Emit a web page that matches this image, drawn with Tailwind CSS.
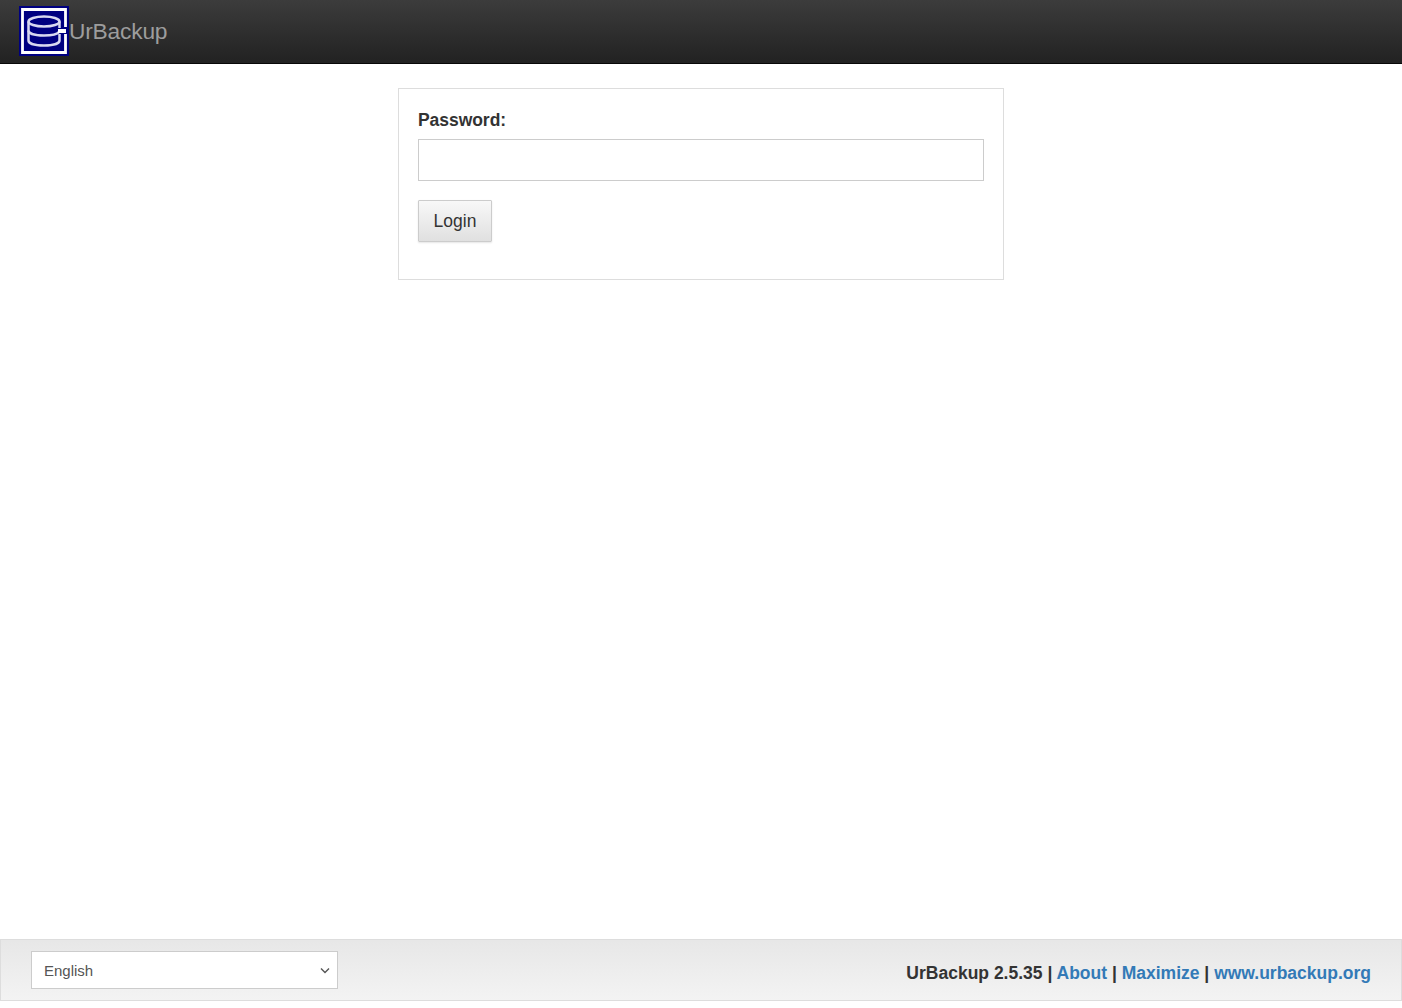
<!DOCTYPE html>
<html>
<head>
<meta charset="utf-8">
<script src="https://cdn.jsdelivr.net/npm/@tailwindcss/browser@4"></script>
<title>UrBackup</title>
</head>
<body class="bg-white font-['Liberation_Sans',Arial,sans-serif] text-[#333]">
<div class="flex flex-col h-[1008px] pb-[7px] overflow-hidden">
  <header class="h-[64px] shrink-0 flex items-center pl-[19px] pb-[2px] border-b border-[#080808] bg-gradient-to-b from-[#3c3c3c] to-[#222222]">
    <svg class="w-[50px] h-[50px] shrink-0" viewBox="0 0 50 50">
      <rect width="50" height="50" fill="#000080"/>
      <path d="M46.500 21V3.500H3.500v43h43V28" fill="none" stroke="#fff" stroke-width="2.800"/>
      <g fill="none" stroke="#d8d8f0" stroke-width="2.500">
        <ellipse cx="25" cy="15.500" rx="15.500" ry="5"/>
        <path d="M9.500 15.500v19c0 3.200 6.500 5 15.500 5s15.500-1.800 15.500-5v-6.500"/>
        <path d="M40.500 15.500V22"/>
        <path d="M9.500 24.500c0 3.200 6.500 5 15.500 5s13.500-1.500 15-3.500"/>
      </g>
      <rect x="39" y="23" width="8" height="4" fill="#fff"/>
    </svg>
    <a href="#" class="text-[22.750px] leading-none text-[#9d9d9d] tracking-[-0.2px] pt-[2px]">UrBackup</a>
  </header>
  <main class="flex-1 pt-[24px] flex justify-center items-start">
    <div class="w-[606px] h-[192px] border border-[#ddd] px-[19px] pt-[19px]">
      <label for="pw" class="block text-[17.500px] leading-[25px] font-bold mb-[6px] text-[#333] tracking-[-0.05px]">Password:</label>
      <input id="pw" type="password" class="block w-full h-[42px] border border-[#ccc] bg-white px-3 outline-none">
      <button class="mt-[19px] block h-[42px] w-[74px] text-[17.500px] text-[#333] border border-[#ccc] rounded-[1px] shadow-[0_1px_2px_rgba(0,0,0,0.1)] bg-gradient-to-b from-[#f8f8f8] to-[#e0e0e0]">Login</button>
    </div>
  </main>
  <footer class="h-[62px] shrink-0 border border-[#ddd] bg-gradient-to-b from-[#e7e7e7] to-[#f3f3f3] flex items-center justify-between pl-[30px] pr-[30px]">
    <div class="relative w-[307px] h-[38px] border border-[#ccc] bg-white flex items-center pl-[12px] pt-[2px] text-[15px] text-[#555]">
      <span>English</span>
      <svg class="absolute right-[7px] top-[15px] w-[10px] h-[7px]" viewBox="0 0 10 7"><path d="M1 1.500l4 4 4-4" fill="none" stroke="#555" stroke-width="1.400"/></svg>
    </div>
    <div class="text-[17.500px] font-bold text-[#333] pt-[6px]">UrBackup 2.5.35 | <a href="#" class="text-[#337ab7]">About</a> | <a href="#" class="text-[#337ab7]">Maximize</a> | <a href="#" class="text-[#337ab7]">www.urbackup.org</a></div>
  </footer>
</div>
</body>
</html>
